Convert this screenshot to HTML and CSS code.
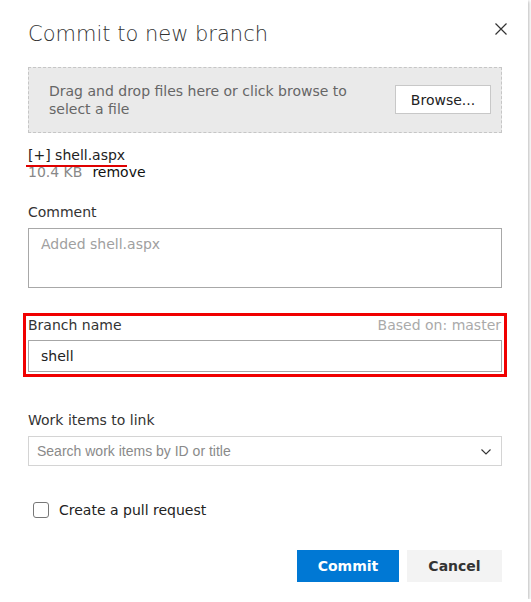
FILE: index.html
```html
<!DOCTYPE html>
<html>
<head>
<meta charset="utf-8">
<link rel="stylesheet" href="styles.css">
</head>
<body>
<div class="dialog">
  <div class="header">
    <h1 class="title">Commit to new branch</h1>
    <button class="close" aria-label="Close">
      <svg width="12" height="12" viewBox="0 0 12 12"><path d="M0.5 0.5 L11.5 11.5 M11.5 0.5 L0.5 11.5" stroke="#333" stroke-width="1.2" fill="none"/></svg>
    </button>
  </div>

  <div class="dropzone">
    <div class="drop-text">Drag and drop files here or click browse to select a file</div>
    <button class="browse">Browse...</button>
  </div>

  <div class="file">
    <div class="file-name"><span class="marked">[+] shell.aspx</span></div>
    <div class="file-meta"><span class="size">10.4 KB</span><span class="remove">remove</span></div>
  </div>

  <label class="label comment-label">Comment</label>
  <div class="textarea"><span class="placeholder">Added shell.aspx</span></div>

  <div class="branch-box">
    <div class="branch-head">
      <span class="label">Branch name</span>
      <span class="based">Based on: master</span>
    </div>
    <div class="input">shell</div>
  </div>

  <label class="label work-label">Work items to link</label>
  <div class="combo">
    <span class="combo-ph">Search work items by ID or title</span>
    <svg class="chev" width="10" height="6" viewBox="0 0 10 6"><path d="M0.5 0.5 L5 5 L9.5 0.5" stroke="#333" stroke-width="1.1" fill="none"/></svg>
  </div>

  <div class="check-row">
    <span class="checkbox"></span>
    <span class="check-label">Create a pull request</span>
  </div>

  <div class="actions">
    <button class="btn primary">Commit</button>
    <button class="btn secondary">Cancel</button>
  </div>
</div>
</body>
</html>
```

FILE: styles.css
```css
html, body {
  margin: 0;
  padding: 0;
  background: #ffffff;
}
body {
  font-family: "DejaVu Sans", sans-serif;
  font-size: 14px;
  line-height: 17px;
  color: #333;
}
.dialog {
  width: 528px;
  height: 599px;
  box-sizing: border-box;
  background: #fff;
  box-shadow: 1px 1px 3px rgba(0,0,0,0.28);
  padding: 20px 26px 0 28px;
  display: flex;
  flex-direction: column;
}
.header {
  display: flex;
  justify-content: space-between;
  align-items: flex-start;
  height: 28px;
}
.title {
  margin: 0;
  font-family: "DejaVu Sans", sans-serif;
  font-weight: 200;
  font-size: 21px;
  line-height: 28px;
  color: #333;
}
.close {
  border: 0;
  background: none;
  padding: 0;
  margin: 3px -5px 0 0;
  width: 12px;
  height: 12px;
  display: flex;
}
.dropzone {
  margin-top: 19px;
  height: 66px;
  box-sizing: border-box;
  border: 1px dashed #c6c6c6;
  background: #eaeaea;
  display: flex;
  align-items: center;
  justify-content: space-between;
  padding: 0 10px 0 20px;
}
.drop-text {
  color: #666;
  width: 320px;
  line-height: 17.5px;
  margin-top: 1px;
}
.browse {
  width: 96px;
  height: 29px;
  background: #fff;
  border: 1px solid #c8c8c8;
  font-family: "DejaVu Sans", sans-serif;
  font-size: 14px;
  color: #222;
  padding: 0;
  margin-top: -1px;
}
.file {
  margin-top: 14px;
}
.marked {
  display: inline-block;
  color: #222;
  margin-left: -2px;
  padding: 0 2px 1px 2px;
  border-bottom: 2px solid #e00000;
  line-height: 17px;
}
.file-meta {
  line-height: 17px;
  margin-top: -3px;
}
.size {
  color: #888;
}
.remove {
  color: #111;
  margin-left: 10px;
}
.label {
  display: block;
  color: #333;
}
.comment-label {
  margin-top: 23px;
}
.textarea {
  margin-top: 7px;
  height: 60px;
  box-sizing: border-box;
  border: 1px solid #a8a8a8;
  padding: 7px 12px;
}
.placeholder {
  color: #a0a0a0;
}
.branch-box {
  margin: 25px -5px 0 -5px;
  border: 3px solid #f00000;
  padding: 1px 2px 2px 2px;
}
.branch-head {
  display: flex;
  justify-content: space-between;
}
.based {
  color: #aaa;
  margin-right: 1px;
}
.input {
  margin-top: 6px;
  height: 32px;
  box-sizing: border-box;
  border: 1px solid #a6a6a6;
  padding: 0 12px;
  line-height: 30px;
  color: #222;
}
.work-label {
  margin-top: 35px;
}
.combo {
  margin-top: 7px;
  height: 30px;
  box-sizing: border-box;
  border: 1px solid #d4d4d4;
  display: flex;
  align-items: center;
  justify-content: space-between;
  padding: 0 10px 0 8px;
}
.combo-ph {
  font-family: "Liberation Sans", Arial, sans-serif;
  font-size: 14px;
  color: #8a8a8a;
}
.chev {
  margin-top: 1px;
}
.check-row {
  margin-top: 36px;
  display: flex;
  align-items: center;
  padding-left: 5px;
  height: 16px;
}
.checkbox {
  width: 16px;
  height: 16px;
  box-sizing: border-box;
  border: 1px solid #777;
  border-radius: 3px;
}
.check-label {
  margin-left: 10px;
  color: #222;
}
.actions {
  margin-top: 32px;
  display: flex;
  justify-content: flex-end;
  gap: 8px;
}
.btn {
  height: 32px;
  border: 0;
  padding: 0;
  font-family: "DejaVu Sans", sans-serif;
  font-size: 14px;
  font-weight: bold;
}
.primary {
  width: 102px;
  background: #0078d4;
  color: #fff;
}
.secondary {
  width: 95px;
  background: #f3f3f3;
  color: #333;
}
```
